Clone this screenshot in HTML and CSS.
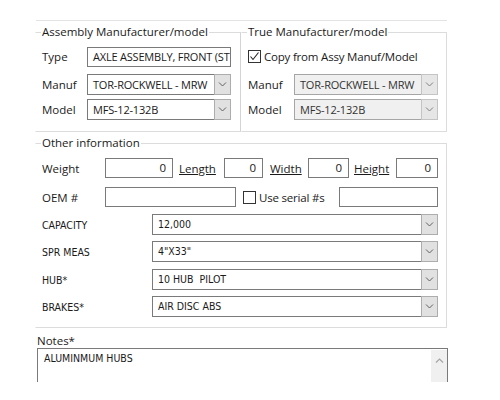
FILE: index.html
```html
<!DOCTYPE html>
<html lang="en">
<head>
    <meta charset="UTF-8">
    <title>Assembly details</title>
    <link rel="stylesheet" href="styles.css">
</head>
<body>

<div class="page">
    <div class="rule"></div>

    <div class="top-groups">
        <fieldset class="group group-assy">
            <legend>Assembly Manufacturer/model</legend>
            <div class="row">
                <span class="lbl lbl-assy">Type</span>
                <div class="field field-wide">AXLE ASSEMBLY, FRONT (ST</div>
            </div>
            <div class="row row-gap7">
                <span class="lbl lbl-assy">Manuf</span>
                <div class="combo">
                    <span class="combo-text">TOR-ROCKWELL - MRW</span>
                    <span class="combo-btn"><svg width="9" height="5" viewBox="0 0 9 5"><polyline points="1,0.5 4.5,4 8,0.5" fill="none" stroke="#606060" stroke-width="1"/></svg></span>
                </div>
            </div>
            <div class="row row-gap4">
                <span class="lbl lbl-assy">Model</span>
                <div class="combo">
                    <span class="combo-text">MFS-12-132B</span>
                    <span class="combo-btn"><svg width="9" height="5" viewBox="0 0 9 5"><polyline points="1,0.5 4.5,4 8,0.5" fill="none" stroke="#606060" stroke-width="1"/></svg></span>
                </div>
            </div>
        </fieldset>

        <fieldset class="group group-true">
            <legend>True Manufacturer/model</legend>
            <div class="row">
                <span class="check checked"><svg width="11" height="11" viewBox="0 0 11 11"><polyline points="1.5,5.5 4,8.5 9.5,1.5" fill="none" stroke="#222" stroke-width="1.1"/></svg></span>
                <span class="check-text">Copy from Assy Manuf/Model</span>
            </div>
            <div class="row row-gap7">
                <span class="lbl lbl-true">Manuf</span>
                <div class="combo combo-off">
                    <span class="combo-text">TOR-ROCKWELL - MRW</span>
                    <span class="combo-btn"><svg width="9" height="5" viewBox="0 0 9 5"><polyline points="1,0.5 4.5,4 8,0.5" fill="none" stroke="#808080" stroke-width="1"/></svg></span>
                </div>
            </div>
            <div class="row row-gap4">
                <span class="lbl lbl-true">Model</span>
                <div class="combo combo-off">
                    <span class="combo-text">MFS-12-132B</span>
                    <span class="combo-btn"><svg width="9" height="5" viewBox="0 0 9 5"><polyline points="1,0.5 4.5,4 8,0.5" fill="none" stroke="#808080" stroke-width="1"/></svg></span>
                </div>
            </div>
        </fieldset>
    </div>

    <fieldset class="group group-other">
        <legend>Other information</legend>
        <div class="row row-short">
            <span class="lbl lbl-other">Weight</span>
            <div class="field num w-weight">0</div>
            <span class="lbl-u u-length">Length</span>
            <div class="field num w-length">0</div>
            <span class="lbl-u u-width">Width</span>
            <div class="field num w-width">0</div>
            <span class="lbl-u u-height">Height</span>
            <div class="field num w-height">0</div>
        </div>
        <div class="row row-short row-gap9">
            <span class="lbl lbl-other">OEM #</span>
            <div class="field w-oem"></div>
            <span class="check check-serial"></span>
            <span class="check-text">Use serial #s</span>
            <div class="field w-serial"></div>
        </div>

        <div class="row row-gap7">
            <span class="lbl lbl-attr">CAPACITY</span>
            <div class="combo combo-attr">
                <span class="combo-text">12,000</span>
                <span class="combo-btn"><svg width="9" height="5" viewBox="0 0 9 5"><polyline points="1,0.5 4.5,4 8,0.5" fill="none" stroke="#606060" stroke-width="1"/></svg></span>
            </div>
        </div>
        <div class="row row-gap6">
            <span class="lbl lbl-attr">SPR MEAS</span>
            <div class="combo combo-attr">
                <span class="combo-text">4"X33"</span>
                <span class="combo-btn"><svg width="9" height="5" viewBox="0 0 9 5"><polyline points="1,0.5 4.5,4 8,0.5" fill="none" stroke="#606060" stroke-width="1"/></svg></span>
            </div>
        </div>
        <div class="row row-gap7">
            <span class="lbl lbl-attr">HUB*</span>
            <div class="combo combo-attr">
                <span class="combo-text">10 HUB  PILOT</span>
                <span class="combo-btn"><svg width="9" height="5" viewBox="0 0 9 5"><polyline points="1,0.5 4.5,4 8,0.5" fill="none" stroke="#606060" stroke-width="1"/></svg></span>
            </div>
        </div>
        <div class="row row-gap6">
            <span class="lbl lbl-attr">BRAKES*</span>
            <div class="combo combo-attr">
                <span class="combo-text">AIR DISC ABS</span>
                <span class="combo-btn"><svg width="9" height="5" viewBox="0 0 9 5"><polyline points="1,0.5 4.5,4 8,0.5" fill="none" stroke="#606060" stroke-width="1"/></svg></span>
            </div>
        </div>
    </fieldset>

    <div class="notes">
        <div class="notes-label">Notes*</div>
        <div class="notes-box">
            <div class="notes-text">ALUMINMUM HUBS</div>
            <div class="scrollbar">
                <svg width="9" height="5" viewBox="0 0 9 5"><polyline points="1,4.5 4.5,1 8,4.5" fill="none" stroke="#a6a6a6" stroke-width="1.2"/></svg>
            </div>
        </div>
    </div>
</div>

</body>
</html>
```

FILE: styles.css
```css
/* Base */
body {
    margin: 0;
    background-color: #ffffff;
    color: #1a1a1a;
    font-family: "Open Sans", "Noto Sans", sans-serif;
    font-size: 11px;
}
.page {
    width: 412px;
    margin-left: 35px;
    padding-top: 20px;
}
.rule {
    height: 1px;
    margin-left: 1px;
    background-color: #e3e3e3;
}

/* Group boxes */
.top-groups {
    display: flex;
    margin-top: 4px;
}
.group {
    box-sizing: border-box;
    min-width: 0;
    margin: 0;
    border: 1px solid #dcdcdc;
    border-left-color: #ffffff;
}
.group legend {
    margin-left: -1px;
    padding: 0 1px;
    line-height: 14px;
    font-size: 11.5px;
}
.group-assy {
    width: 206px;
    padding: 7px 9px 11px 6px;
    border-right-color: #d4d4d4;
}
.group-true {
    width: 206px;
    padding: 7px 8px 11px 6px;
}
.group-other {
    width: 412px;
    margin-top: 4px;
    padding: 8px 8px 10px 6px;
}

/* Rows */
.row {
    display: flex;
    align-items: center;
    height: 21px;
}
.row-short { height: 20px; }
.row-gap4 { margin-top: 4px; }
.row-gap6 { margin-top: 6px; }
.row-gap7 { margin-top: 7px; }
.row-gap9 { margin-top: 9px; }

.lbl {
    flex: none;
    font-size: 11.5px;
}
.lbl-assy { width: 45px; }
.lbl-true { width: 46px; }
.lbl-other { width: 63px; }
.lbl-attr {
    width: 110px;
    font-family: "DejaVu Sans Condensed", "DejaVu Sans", sans-serif;
    font-size: 10.5px;
}
.lbl-u {
    flex: none;
    font-size: 11.5px;
    text-decoration: underline;
}
.u-length { width: 45px; margin-left: 6px; }
.u-width { width: 38px; margin-left: 7px; }
.u-height { width: 42px; margin-left: 5px; }

/* Text boxes */
.field {
    box-sizing: border-box;
    flex: none;
    height: 20px;
    padding: 0 5px;
    overflow: hidden;
    white-space: nowrap;
    line-height: 18px;
    letter-spacing: -0.2px;
    border: 1px solid #7a7a7a;
    background-color: #ffffff;
}
.field-wide { flex: 1; }
.num {
    padding-right: 6px;
    text-align: right;
    font-size: 11.5px;
}
.w-weight { width: 68px; }
.w-length { width: 39px; }
.w-width { width: 41px; }
.w-height { width: 42px; }
.w-oem { width: 131px; }
.w-serial {
    width: 99px;
    margin-left: auto;
}

/* Combo boxes */
.combo {
    box-sizing: border-box;
    display: flex;
    flex: 1;
    height: 21px;
    border: 1px solid #7a7a7a;
    background-color: #ffffff;
}
.combo-text {
    flex: 1;
    padding-left: 5px;
    overflow: hidden;
    white-space: pre;
    line-height: 19px;
    letter-spacing: -0.2px;
}
.combo-btn {
    box-sizing: border-box;
    display: flex;
    align-items: center;
    justify-content: center;
    width: 17px;
    margin: -1px -1px -1px 0;
    border: 1px solid #adadad;
    background-color: #e1e1e1;
}
.combo-off {
    border-color: #a6a6a6;
    background-color: #f0f0f0;
}
.combo-off .combo-text {
    color: #333333;
}
.combo-off .combo-btn {
    background-color: #e6e6e6;
    border-color: #c4c4c4;
}
.combo-attr .combo-text {
    font-family: "DejaVu Sans Condensed", "DejaVu Sans", sans-serif;
    font-size: 10.5px;
    letter-spacing: 0;
}

/* Check boxes */
.check {
    box-sizing: border-box;
    display: flex;
    align-items: center;
    justify-content: center;
    flex: none;
    width: 13px;
    height: 13px;
    border: 1px solid #333333;
    background-color: #ffffff;
}
.check-serial { margin-left: 7px; }
.check-text {
    margin-left: 3px;
    white-space: nowrap;
    font-size: 11.5px;
    letter-spacing: -0.2px;
}

/* Notes */
.notes {
    margin-top: 6px;
}
.notes-label {
    margin-left: 2px;
    line-height: 14px;
    font-size: 11.5px;
}
.notes-box {
    box-sizing: border-box;
    display: flex;
    width: 411px;
    height: 34px;
    margin-left: 2px;
    border: 1px solid #7a7a7a;
    border-bottom: none;
    overflow: hidden;
}
.notes-text {
    flex: 1;
    padding: 3px 6px;
    font-family: "DejaVu Sans Condensed", "DejaVu Sans", sans-serif;
    font-size: 10.5px;
}
.scrollbar {
    display: flex;
    justify-content: center;
    width: 16px;
    margin-top: 1px;
    padding-top: 8px;
    background-color: #f0f0f0;
}
```
